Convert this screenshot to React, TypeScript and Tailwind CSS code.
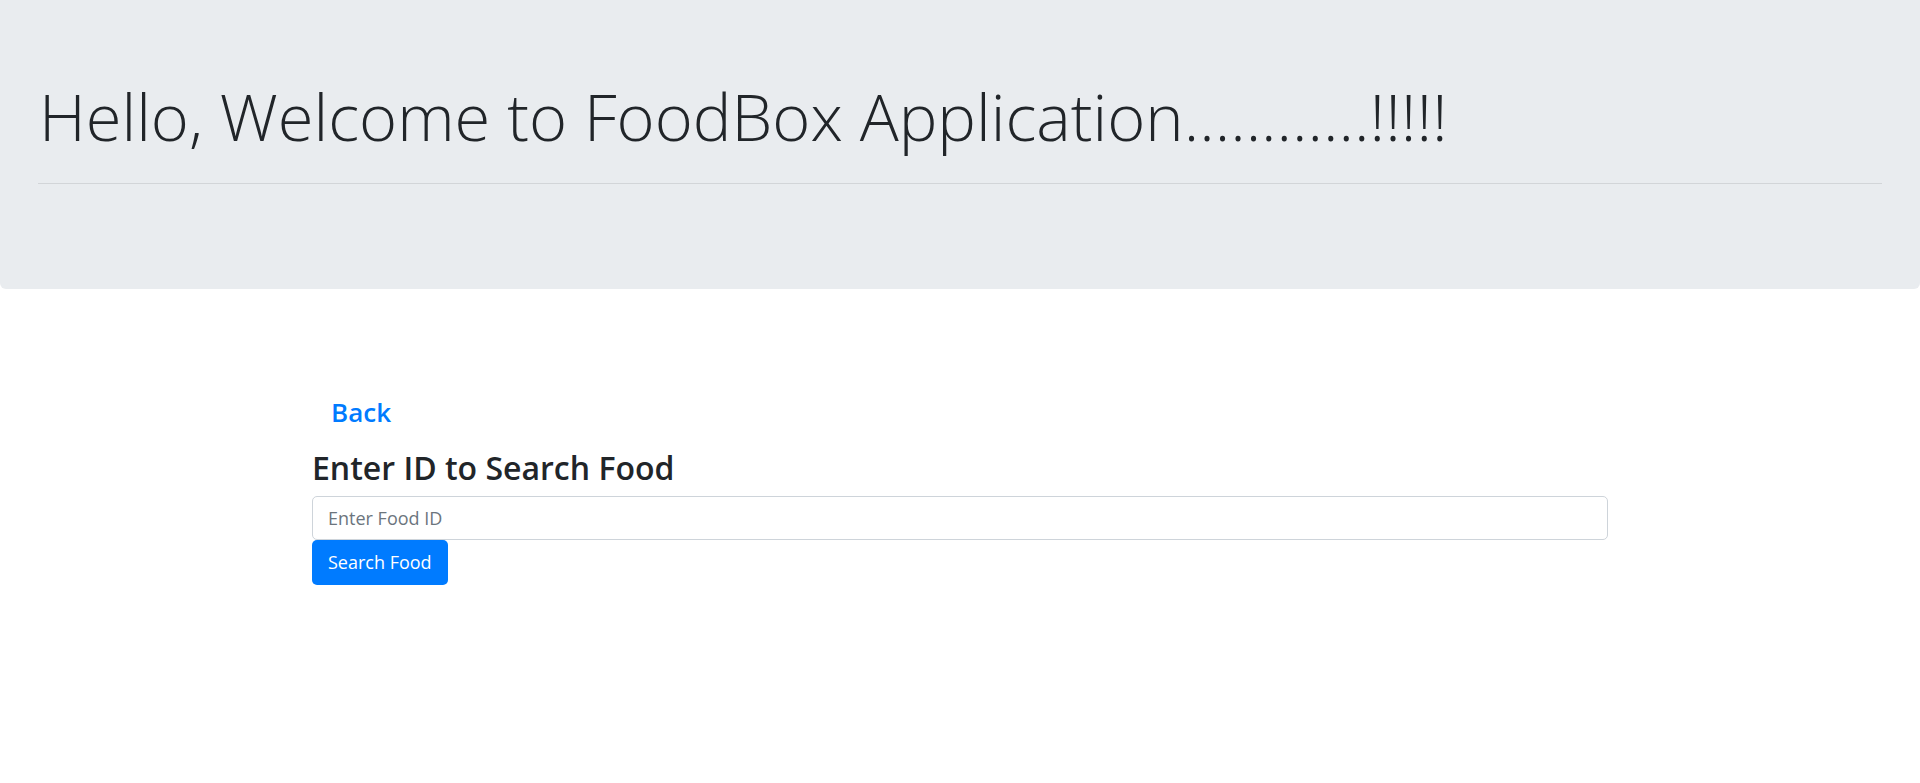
import React from "react";

export default function App() {
  return (
    <div className="min-h-[783px] bg-white text-[#212529]" style={{ fontFamily: '"Open Sans", "Noto Sans", sans-serif' }}>
      <div className="h-[289px] bg-[#e9ecef] rounded-b-[6px] px-[38px] pt-[84px]">
        <h1 className="text-[65px] leading-none font-light text-[#212529] whitespace-nowrap ml-[1px]">
          Hello, Welcome to FoodBox Application............!!!!!
        </h1>
        <div className="mt-[34px] h-px bg-[#d2d5d8]" />
      </div>
      <div className="ml-[312px] w-[1296px]">
        <a href="#" className="block mt-[110px] ml-[19px] text-[26px] leading-none font-semibold text-[#007bff]">
          Back
        </a>
        <h3 className="mt-[27px] text-[32px] leading-none font-semibold text-[#212529]">Enter ID to Search Food</h3>
        <input
          type="text"
          placeholder="Enter Food ID"
          className="mt-[12px] block w-full h-[44px] border border-[#ced4da] rounded-[5px] px-[15px] text-[18px] text-[#495057] placeholder:text-[#6c757d] outline-none"
        />
        <button className="block h-[45px] px-[16px] bg-[#007bff] text-white text-[18px] rounded-[5px]">
          Search Food
        </button>
      </div>
    </div>
  );
}
